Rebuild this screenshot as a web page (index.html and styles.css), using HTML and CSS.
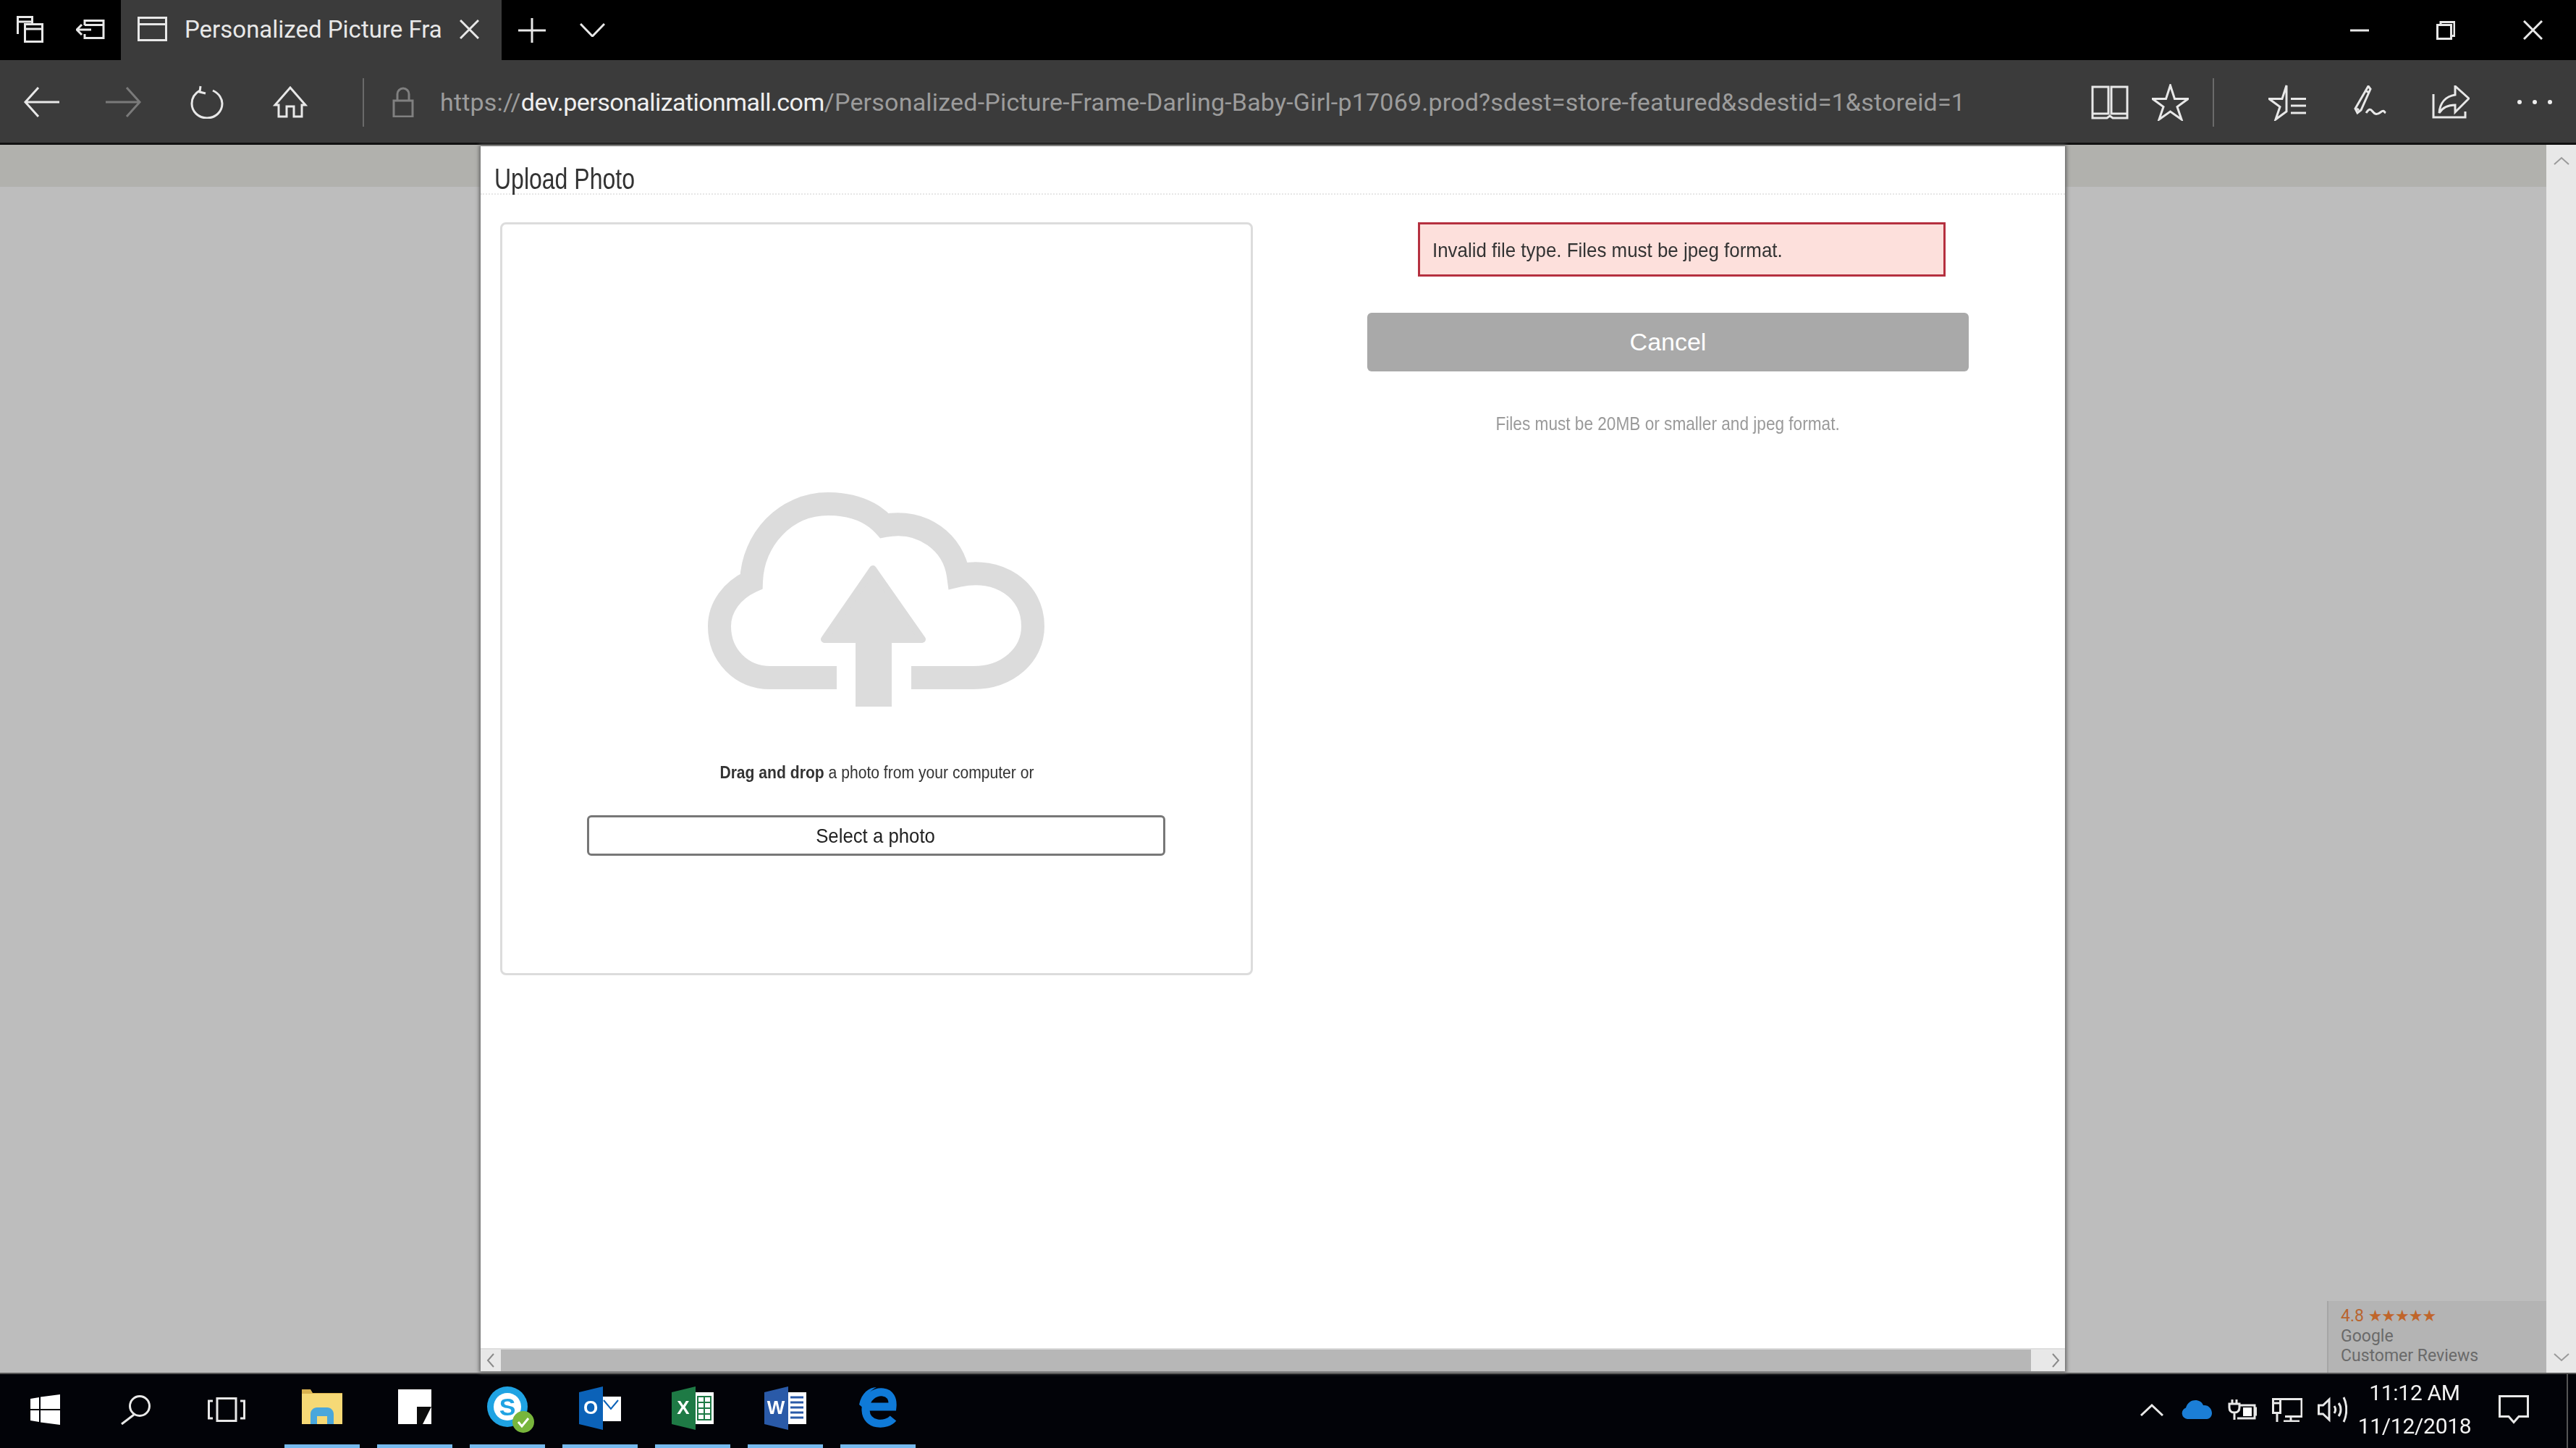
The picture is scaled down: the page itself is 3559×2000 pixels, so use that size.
FILE: index.html
```html
<!DOCTYPE html>
<html lang="en">
<head>
<meta charset="utf-8">
<title>Personalized Picture Frame</title>
<link rel="stylesheet" href="styles.css">
</head>
<body>
<div class="screen">
  <header class="titlebar">
    <svg class="ic tb-aside" viewBox="0 0 37 37"><path d="M1.500 25V1.500h20V11M1.500 8h20"/><path d="M11.500 11.500h24v24h-24zM11.500 18h24"/></svg>
    <svg class="ic tb-set" viewBox="0 0 40 27"><path d="M12 8V1.500h26v24H12V20M12 7.500h26M1 14h20M8 7l-7 7 7 7"/></svg>
    <div class="tab">
      <svg class="ic tab-icon" viewBox="0 0 41 34"><path d="M1.500 1.500h38v31h-38zM1.500 10.500h38"/></svg>
      <span class="tab-title">Personalized Picture Fra</span>
      <svg class="ic tab-close" viewBox="0 0 27 27"><path d="M1 1l25 25M26 1L1 26"/></svg>
    </div>
    <svg class="ic tb-plus" viewBox="0 0 38 34"><path d="M19 0v34M0 17h38"/></svg>
    <svg class="ic tb-chev" viewBox="0 0 35 19"><path d="M1 1l16.500 17L34 1"/></svg>
    <div class="winbtns">
      <svg class="ic win-min" viewBox="0 0 26 4"><path d="M0 2h26"/></svg>
      <svg class="ic win-max" viewBox="0 0 26 26"><path d="M6 5V1.500h19v19h-4"/><path d="M1.500 5.500h19v19h-19z"/></svg>
      <svg class="ic win-close" viewBox="0 0 27 27"><path d="M1 1l25 25M26 1L1 26"/></svg>
    </div>
  </header>

  <nav class="toolbar">
    <svg class="ic nav-back" viewBox="0 0 51 44"><path d="M50 22H3M21 2L3 22l18 20"/></svg>
    <svg class="ic nav-fwd" viewBox="0 0 51 44"><path d="M1 22h47M30 2l18 20-18 20"/></svg>
    <svg class="ic nav-ref" viewBox="0 0 48 46"><path d="M32 7c9 4 13 12 13 18 0 11-9 20-21 20S3 36 3 25C3 18 7 11 14 7M15 1l-1 8 8 2"/></svg>
    <svg class="ic nav-home" viewBox="0 0 48 44"><path d="M24 2L3 26h5v16h11V28h10v14h11V26h5z"/></svg>
    <span class="sep nav-sep"></span>
    <svg class="ic nav-lock" viewBox="0 0 30 42"><path d="M2 19h26v22H2zM7 19V10a8 8 0 0 1 16 0v9"/></svg>
    <div class="url"><span class="url-dim">https://</span><span class="url-host">dev.personalizationmall.com</span><span class="url-dim">/Personalized-Picture-Frame-Darling-Baby-Girl-p17069.prod?sdest=store-featured&amp;sdestid=1&amp;storeid=1</span></div>
    <svg class="ic act-book" viewBox="0 0 52 48"><path d="M2 3h22v37H2zM28 3h22v37H28zM2 40v6h20l4-3 4 3h20v-6"/></svg>
    <svg class="ic act-star" viewBox="0 0 51 51"><path d="M25.500 2l6 18.500H50L35 31.500 41 49 25.500 38 10 49l6-17.500L1 20.500h18.500z"/></svg>
    <span class="sep act-sep"></span>
    <svg class="ic act-fav" viewBox="0 0 52 51"><path d="M25 2l-6 18.500H1l15 11L10 49l15-11zM31 20.500h21M31 30h21M31 40h21"/></svg>
    <svg class="ic act-pen" viewBox="0 0 46 46"><path d="M21 1l3 4-13 29-5 4-3-6zM17 7l5 3M8 34l-3-2M18 38c4-6 6-6 9-2s6 5 11 1 5 0 7 1"/></svg>
    <svg class="ic act-share" viewBox="0 0 52 46"><path d="M2 12v32h44v-8M32 1l19 17-19 19V27C22 27 15 30 10 38c1-14 9-23 22-25z"/></svg>
    <div class="dots"><i></i><i></i><i></i></div>
  </nav>

  <main class="viewport">
    <div class="gutter-left"></div>
    <section class="modal">
      <h1 class="modal-title"><span>Upload Photo</span></h1>
      <div class="modal-body">
        <div class="drop">
          <svg class="cloud" viewBox="978 679 465 297">
            <path class="cloud-line" d="M1156 936H1064C1024 936 994 905 994 865C994 838 1012 815 1038 803C1040 745 1085 696 1144 696C1176 696 1204 706 1222 726C1275 716 1318 750 1324 795C1380 782 1427 815 1427 865C1427 905 1392 936 1345 936H1259"/>
            <path class="cloud-head" d="M1206 786L1139 883H1274Z"/>
            <rect class="cloud-stem" x="1182" y="880" width="50" height="96"/>
          </svg>
          <p class="drop-text"><span><strong>Drag and drop</strong> a photo from your computer or</span></p>
          <button class="select-btn"><span>Select a photo</span></button>
        </div>
        <div class="side">
          <div class="error"><span>Invalid file type. Files must be jpeg format.</span></div>
          <button class="cancel-btn"><span>Cancel</span></button>
          <p class="note"><span>Files must be 20MB or smaller and jpeg format.</span></p>
        </div>
      </div>
      <div class="hscroll">
        <span class="hs-btn"><svg class="chev" viewBox="0 0 12 20"><path d="M10 1L2 10l8 9"/></svg></span>
        <span class="hs-thumb"></span>
        <span class="hs-btn hs-btn-r"><svg class="chev" viewBox="0 0 12 20"><path d="M2 1l8 9-8 9"/></svg></span>
      </div>
    </section>
    <div class="gutter-right"></div>
    <aside class="vscroll">
      <svg class="vchev" viewBox="0 0 22 12"><path d="M1 11l10-9 10 9"/></svg>
      <svg class="vchev" viewBox="0 0 22 12"><path d="M1 1l10 9 10-9"/></svg>
    </aside>
    <div class="badge">
      <div class="rating">4.8 <span class="stars">★★★★★</span></div>
      <div>Google</div>
      <div>Customer Reviews</div>
    </div>
  </main>

  <footer class="taskbar">
    <span class="sys"><svg class="i-win" viewBox="0 0 41 42"><path class="white" d="M0 6l12-2v16H0zM14 3.500L41 0v20H14zM0 22h12v16L0 36zM14 22h27v20l-27-3.500z"/></svg></span>
    <span class="sys"><svg class="ic i-search" viewBox="0 0 43 41"><circle cx="27" cy="15" r="13.500"/><path d="M19 27L2 40"/></svg></span>
    <span class="sys"><svg class="ic i-view" viewBox="0 0 52 34"><path d="M13 1.500h26v31H13zM7 5H1.500v24H7M45 5h5.500v24H45"/></svg></span>
    <div class="apps">
      <span class="app">
        <svg class="i-app" viewBox="0 0 56 48"><path fill="#d9b24f" d="M0 0h12l3 5h41v6H0z"/><path fill="#f6d976" d="M0 6h56v42H0z"/><path fill="#4aa7dc" d="M12 48V34c0-5 4-9 9-9h14c5 0 9 4 9 9v14h-9V37H21v11z"/></svg>
      </span>
      <span class="app">
        <svg class="i-app" viewBox="0 0 46 48"><path fill="#fff" d="M0 0h46v48H0z"/><path fill="#0b0b0b" d="M26 24h20L34 48h-8z"/></svg>
      </span>
      <span class="app app-split">
        <svg class="i-skype" viewBox="0 0 65 65"><circle cx="28" cy="29" r="28" fill="#1fa3e3"/><circle cx="28" cy="29" r="19" fill="#fff"/><text x="28" y="41" class="skype-s">S</text><circle cx="50" cy="50" r="15" fill="#78b53c"/><path d="M43 50l5 6 9-11" fill="none" stroke="#fff" stroke-width="3"/></svg>
      </span>
      <span class="app app-split">
        <svg class="i-office" viewBox="0 0 58 60"><path fill="#fff" d="M30 14h28v34H30z"/><path fill="none" stroke="#0b62b8" stroke-width="2" d="M34 19l10 12 10-12"/><path fill="#0b62b8" d="M0 8L33 0v60L0 52z"/><text x="16" y="38" class="office-l">O</text></svg>
      </span>
      <span class="app">
        <svg class="i-office" viewBox="0 0 58 60"><path fill="#fff" d="M30 8h28v44H30z"/><path fill="none" stroke="#1e7a45" stroke-width="2" d="M36 14h18v32H36zM45 14v32M36 22h18M36 30h18M36 38h18"/><path fill="#1e7a45" d="M0 8L33 0v60L0 52z"/><text x="16" y="38" class="office-l">X</text></svg>
      </span>
      <span class="app">
        <svg class="i-office" viewBox="0 0 58 60"><path fill="#fff" d="M30 8h28v44H30z"/><path fill="none" stroke="#2a5aa8" stroke-width="3" d="M36 15h18M36 22h18M36 29h18M36 36h18M36 43h18"/><path fill="#2a5aa8" d="M0 8L33 0v60L0 52z"/><text x="16" y="38" class="office-l">W</text></svg>
      </span>
      <span class="app">
        <svg class="i-edge" viewBox="0 0 52 58"><path fill="none" stroke="#0f7ad8" stroke-width="11" d="M47 43C38 54 10 54 9 32 8 12 24 6 33 7c10 1 14 10 13 20H8"/><path fill="#0f7ad8" d="M0 24C3 8 14 0 24 0 14 5 8 14 7 30z"/></svg>
      </span>
    </div>
    <div class="tray">
      <svg class="ic t-chev" viewBox="0 0 32 17"><path d="M1 16L16 2l15 14"/></svg>
      <svg class="t-drive" viewBox="0 0 42 26"><path fill="#1b7ed6" d="M8 26a8 8 0 0 1-2-15.500C8 3 14 0 19 0c5 0 9 2 11 7 7-1 12 5 12 11 0 4-3 8-7 8z"/></svg>
      <svg class="ic t-power" viewBox="0 0 41 28"><path d="M7 0v6M13 0v6M3 6h14v5c0 5-3 7-7 7s-7-2-7-7zM10 18v10M18 8h20v18H14M38 12h3v9h-3"/><path class="white" d="M22 11h12v12H22z"/></svg>
      <svg class="ic t-net" viewBox="0 0 42 33"><path d="M12 1.500h29v24H18M1.500 1.500h10v19h-10zM1.500 7h10M7 20v13M26 26v6M16 32h22"/></svg>
      <svg class="ic t-vol" viewBox="0 0 41 36"><path d="M1.500 12h6L16 4v28l-8.500-8h-6zM23 13c2 3 2 7 0 10M29 9c4 5 4 13 0 18M36 1c5 10 5 24 0 34"/></svg>
      <div class="clock"><div>11:12 AM</div><div>11/12/2018</div></div>
      <svg class="ic t-action" viewBox="0 0 42 40"><path d="M1.500 1.500h39v28H28l-7 8-7-8H1.500z"/></svg>
      <span class="t-line"></span>
    </div>
  </footer>
</div>
</body>
</html>
```
FILE: styles.css
```css
* { box-sizing: border-box; }
html, body { margin: 0; padding: 0; }
body { background: #000; overflow: hidden; font-family: "Liberation Sans", Arial, sans-serif; }
.screen { width: 3559px; height: 2000px; display: flex; flex-direction: column; overflow: hidden; filter: blur(0.7px); }

.ic { fill: none; stroke: #e8e8e8; stroke-width: 3; flex: none; display: block; }
.white { fill: #fff; stroke: none; }

/* title bar */
.titlebar { height: 83px; background: #000; display: flex; align-items: center; padding-left: 23px; flex: none; }
.tb-aside { width: 37px; height: 37px; margin-top: -2px; }
.tb-set { width: 40px; height: 27px; margin-left: 45px; margin-top: -2px; }
.tab { width: 526px; height: 83px; margin-left: 22px; background: #3b3b3b; display: flex; align-items: center; padding-left: 23px; color: #e8e8e8; }
.tab-icon { width: 41px; height: 34px; margin-top: -4px; }
.tab-title { margin-left: 24px; width: 355px; font: 33px Roboto, "Liberation Sans", sans-serif; white-space: nowrap; margin-top: -3px; }
.tab-close { width: 27px; height: 27px; margin-left: 25px; margin-top: -2px; }
.tb-plus { width: 38px; height: 34px; margin-left: 23px; }
.tb-chev { width: 35px; height: 19px; margin-left: 47px; }
.winbtns { margin-left: auto; display: flex; align-items: center; padding-right: 46px; }
.win-min { width: 26px; height: 4px; }
.win-max { width: 26px; height: 26px; margin-left: 93px; }
.win-close { width: 27px; height: 27px; margin-left: 94px; }

/* toolbar */
.toolbar { height: 117px; background: #3b3b3b; border-bottom: 3px solid #111; display: flex; align-items: center; flex: none; padding-left: 32px; padding-top: 2px; }
.nav-back { width: 51px; height: 44px; }
.nav-fwd { width: 51px; height: 44px; margin-left: 62px; stroke: #7a7a7a; }
.nav-ref { width: 48px; height: 46px; margin-left: 66px; }
.nav-home { width: 48px; height: 44px; margin-left: 67px; }
.sep { width: 2px; height: 67px; background: #6a6a6a; flex: none; }
.nav-sep { margin-left: 76px; }
.nav-lock { width: 30px; height: 42px; margin-left: 39px; stroke: #808080; }
.url { margin-left: 36px; width: 2281px; font: 34px Roboto, "Liberation Sans", sans-serif; white-space: nowrap; letter-spacing: 0.2px; }
.url-dim { color: #9c9c9c; }
.url-host { color: #efefef; letter-spacing: -0.55px; }
.act-book { width: 52px; height: 48px; }
.act-star { width: 51px; height: 51px; margin-left: 32px; }
.act-sep { margin-left: 33px; }
.act-fav { width: 52px; height: 51px; margin-left: 75px; }
.act-pen { width: 46px; height: 46px; margin-left: 65px; }
.act-share { width: 52px; height: 46px; margin-left: 63px; }
.dots { display: flex; gap: 15px; margin-left: 66px; }
.dots i { width: 6px; height: 6px; border-radius: 50%; background: #eee; display: block; }

/* page */
.viewport { flex: 1; display: flex; position: relative; min-height: 0; background: linear-gradient(#b1b1ad 0, #b1b1ad 58px, #bdbdbd 58px); }
.gutter-left { width: 664px; flex: none; }
.gutter-right { flex: 1; }
.modal { width: 2189px; flex: none; background: #fff; margin-top: 2px; margin-bottom: 2px; box-shadow: 0 0 5px 2px #666; display: flex; flex-direction: column; position: relative; }
.modal-title { margin: 0; height: 67px; padding: 23px 0 0 19px; font: 400 40px/44px "Liberation Sans", sans-serif; color: #333; border-bottom: 2px dotted #e6e6e6; flex: none; }
.modal-title span { display: inline-block; transform: scaleX(0.8); transform-origin: left center; white-space: nowrap; }
.modal-body { flex: 1; display: flex; padding: 38px 0 0 27px; min-height: 0; }
.drop { width: 1040px; height: 1040px; border: 3px solid #dcdcdc; border-radius: 8px; display: flex; flex-direction: column; align-items: center; padding-top: 369px; flex: none; }
.cloud { width: 465px; height: 297px; display: block; flex: none; margin-left: -2px; }
.cloud-line { fill: none; stroke: #dcdcdc; stroke-width: 32; }
.cloud-head { fill: #dcdcdc; stroke: #dcdcdc; stroke-width: 10; stroke-linejoin: round; }
.cloud-stem { fill: #dcdcdc; }
.drop-text { margin: 76px 0 0; font: 23px/30px "Liberation Sans", sans-serif; color: #333; }
.drop-text span { display: inline-block; transform: scaleX(0.918); white-space: nowrap; }
.select-btn { margin: 44px 0 0 -2px; width: 799px; height: 56px; border: 3px solid #777; border-radius: 6px; background: #fff; color: #222; font: 28px "Liberation Sans", sans-serif; padding: 2px 0 0; }
.select-btn span { display: inline-block; transform: scaleX(0.92); }
.side { width: 831px; margin-left: 158px; flex: none; }
.error { width: 729px; height: 75px; margin-left: 70px; border: 3px solid #b5303f; background: #fde0dc; padding: 2px 17px 0; display: flex; align-items: center; font: 28px "Liberation Sans", sans-serif; color: #333; }
.error span { display: inline-block; transform: scaleX(0.925); transform-origin: left center; white-space: nowrap; }
.cancel-btn { display: block; width: 831px; height: 81px; margin-top: 50px; border: 0; border-radius: 6px; background: #a9a9a9; color: #fff; font: 34px "Liberation Sans", sans-serif; padding: 0; }
.note { margin: 57px 0 0; text-align: center; font: 26px/30px "Liberation Sans", sans-serif; color: #9a9a9a; }
.note span { display: inline-block; transform: scaleX(0.87); white-space: nowrap; }

.hscroll { height: 32px; flex: none; display: flex; background: #e8e8e8; border-top: 2px solid #dedede; }
.hs-btn { width: 28px; flex: none; display: flex; align-items: center; justify-content: center; background: #e8e8e8; }
.hs-btn-r { width: 47px; padding-left: 20px; }
.hs-thumb { flex: 1; background: #b7b7b7; }
.chev { width: 12px; height: 20px; fill: none; stroke: #8a8a8a; stroke-width: 2; display: block; }

.vscroll { width: 41px; flex: none; background: #e8e8e8; display: flex; flex-direction: column; justify-content: space-between; align-items: center; padding: 16px 0 15px; }
.vchev { width: 22px; height: 12px; fill: none; stroke: #9a9a9a; stroke-width: 2; display: block; }

.badge { position: absolute; right: 41px; bottom: 0; width: 303px; height: 99px; background: #b4b4b4; border-left: 2px solid #a6a6a6; padding: 7px 0 0 17px; font: 23px/27.500px Roboto, "Liberation Sans", sans-serif; color: #6a6a6a; }
.rating { color: #b9652f; }
.stars { font-family: "DejaVu Sans", sans-serif; font-size: 22px; letter-spacing: -1px; color: #c0652a; }

/* taskbar */
.taskbar { height: 104px; background: #020308; border-top: 2px solid #555; display: flex; align-items: stretch; flex: none; }
.sys { width: 125px; flex: none; display: flex; align-items: center; justify-content: center; padding-bottom: 4px; }
.i-win { width: 41px; height: 42px; }
.i-search { width: 43px; height: 41px; }
.i-view { width: 52px; height: 34px; }
.apps { display: flex; gap: 24px; margin-left: 18px; flex: none; }
.app { width: 104px; flex: none; display: flex; align-items: center; justify-content: center; border-bottom: 5px solid #76b9ed; }
.i-app { height: 48px; width: auto; display: block; margin-bottom: 8px; }
.i-skype { width: 65px; height: 65px; display: block; margin-left: 8px; margin-bottom: 0; }
.i-office { width: 58px; height: 60px; display: block; margin-bottom: 4px; }
.i-edge { width: 52px; height: 58px; display: block; margin-bottom: 4px; }
.skype-s { font: 700 34px "Liberation Sans", sans-serif; fill: #1fa3e3; text-anchor: middle; }
.office-l { font: 700 26px "Liberation Sans", sans-serif; fill: #fff; text-anchor: middle; }

.tray { margin-left: auto; display: flex; align-items: center; padding-bottom: 4px; position: relative; padding-right: 65px; }
.t-chev { width: 32px; height: 17px; }
.t-drive { width: 42px; height: 26px; margin-left: 25px; display: block; flex: none; }
.t-power { width: 41px; height: 28px; margin-left: 21px; }
.t-net { width: 42px; height: 33px; margin-left: 21px; }
.t-vol { width: 41px; height: 36px; margin-left: 21px; }
.clock { width: 160px; margin-left: 13px; text-align: center; color: #f2f2f2; font: 30px/46px Roboto, "Liberation Sans", sans-serif; white-space: nowrap; letter-spacing: -0.300px; }
.t-action { width: 42px; height: 40px; margin-left: 36px; }
.t-line { position: absolute; right: 11px; top: 0; bottom: 0; width: 2px; background: #555; }
```
